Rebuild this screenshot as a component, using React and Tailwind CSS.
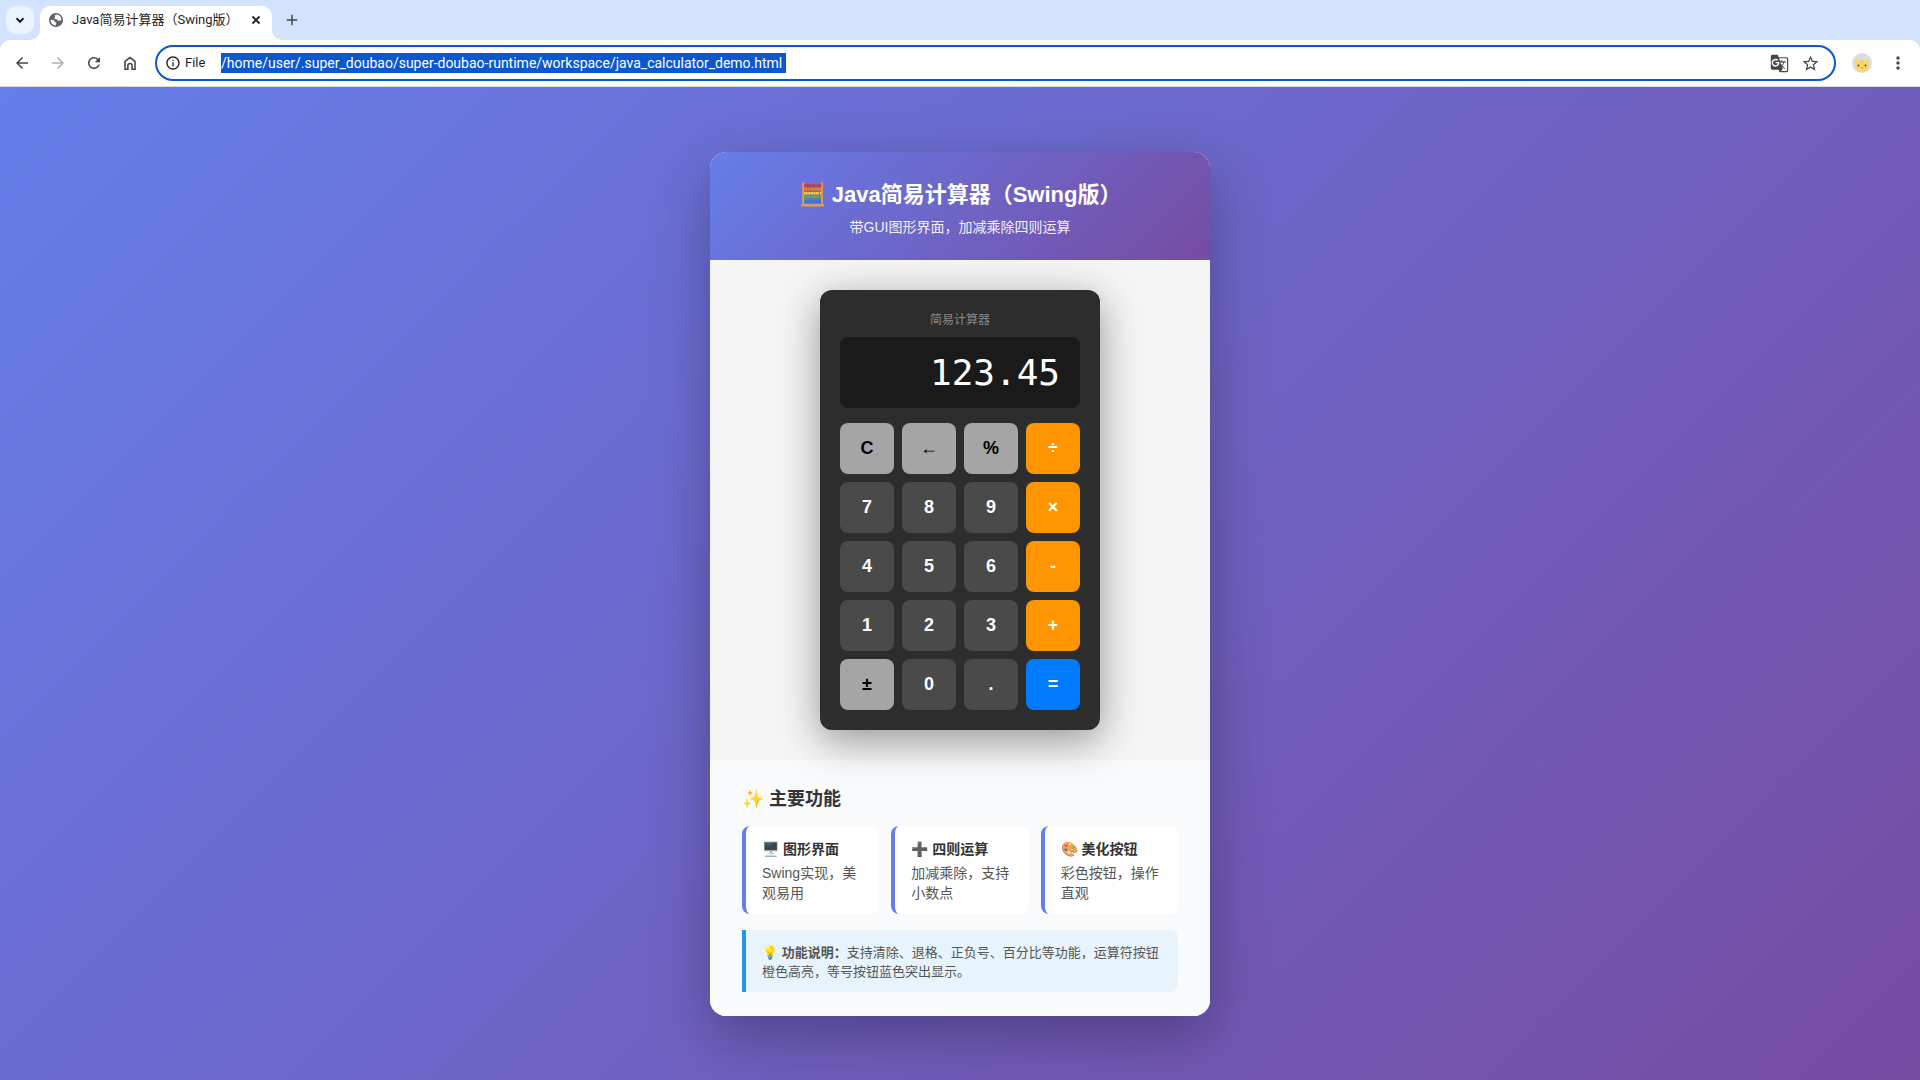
import { useState } from 'react';
import { MdGTranslate, MdStarBorder, MdMoreVert, MdArrowBack, MdArrowForward, MdRefresh, MdInfoOutline, MdAdd } from 'react-icons/md';

const KEYS = [
  { label: 'C', kind: 'fn' },
  { label: '←', kind: 'fn' },
  { label: '%', kind: 'fn' },
  { label: '÷', kind: 'op' },
  { label: '7', kind: 'num' },
  { label: '8', kind: 'num' },
  { label: '9', kind: 'num' },
  { label: '×', kind: 'op' },
  { label: '4', kind: 'num' },
  { label: '5', kind: 'num' },
  { label: '6', kind: 'num' },
  { label: '-', kind: 'op' },
  { label: '1', kind: 'num' },
  { label: '2', kind: 'num' },
  { label: '3', kind: 'num' },
  { label: '+', kind: 'op' },
  { label: '±', kind: 'fn' },
  { label: '0', kind: 'num' },
  { label: '.', kind: 'num' },
  { label: '=', kind: 'eq' },
];

const KEY_STYLES = {
  fn: 'bg-[#a5a5a5] text-black',
  op: 'bg-[#ff9500] text-white',
  num: 'bg-[#4a4a4a] text-white',
  eq: 'bg-[#007aff] text-white',
};

const FEATURES = [
  { title: '🖥️ 图形界面', body: 'Swing实现，美观易用' },
  { title: '➕ 四则运算', body: '加减乘除，支持小数点' },
  { title: '🎨 美化按钮', body: '彩色按钮，操作直观' },
];

function GlobeIcon() {
  return (
    <svg width="16" height="16" viewBox="0 0 16 16">
      <circle cx="8" cy="8" r="7" fill="#5f6368" />
      <path d="M8.500 2.600c-1.300.2-1.700 1-1.500 1.900.2.8-.7 1-.5 1.900.3.900 1.700.6 2.600 1 .8.400.5 1.400 1.500 1.500 1 .1 1.500-.8 2.700-.8a5.500 5.500 0 0 0-4.800-5.500z" fill="#fff" />
      <path d="M2.500 7.800c1.400-.2 2.800 0 3.600.7.700.7.400 1.500 1.300 1.800.8.300 1 .7.900 1.400-.1.600-.6.9-.5 1.700A5.500 5.500 0 0 1 2.500 7.800z" fill="#fff" />
    </svg>
  );
}

function CatAvatar() {
  return (
    <svg width="20" height="20" viewBox="0 0 20 20">
      <circle cx="10" cy="10" r="10" fill="#dadce0" />
      <path d="M4 6.200c.2-.7.800-.8 1.300-.3L7.300 7.600h5.400l2-1.700c.5-.5 1.100-.4 1.300.3.5 1.800.9 4 .9 6.300 0 3.800-3 6.500-6.900 6.500s-6.900-2.700-6.900-6.500c0-2.300.4-4.500.9-6.300z" fill="#fbd866" />
      <path d="M9 7.600h.6v2H9zM10.500 7.600h.6v2h-.6z" fill="#f0a63c" />
      <circle cx="6.500" cy="12.500" r="1" fill="#4a4a4a" />
      <circle cx="13.500" cy="12.500" r="1" fill="#4a4a4a" />
      <path d="M8.600 14.500q.7.900 1.400 0q.7.900 1.400 0" fill="none" stroke="#c77a2a" strokeWidth=".8" />
      <circle cx="5.500" cy="14.800" r="1" fill="#f9b7a0" />
      <circle cx="14.500" cy="14.800" r="1" fill="#f9b7a0" />
    </svg>
  );
}

function TabStrip() {
  return (
    <div className="flex h-10 items-end bg-[#d3e3fd] pl-1.5">
      <button aria-label="Search tabs" className="mb-1.5 flex h-7 w-7 items-center justify-center rounded-[10px] bg-[#ecf3fe] text-[#1f1f1f]">
        <svg width="16" height="16" viewBox="0 0 16 16" fill="none" stroke="currentColor" strokeWidth="2">
          <path d="M4.500 6.300L8 9.800l3.500-3.500" />
        </svg>
      </button>
      <div className="relative ml-1.5 flex h-[34px] w-[232px] items-center rounded-t-[10px] bg-white pb-1.5 pl-2 text-[#1f1f1f]">
        {/* curved feet of the active tab */}
        <svg className="absolute bottom-0 -left-2.5" width="10" height="10" viewBox="0 0 10 10">
          <path d="M10 0v10H0A10 10 0 0 0 10 0z" fill="#fff" />
        </svg>
        <svg className="absolute -right-2.5 bottom-0" width="10" height="10" viewBox="0 0 10 10">
          <path d="M0 0v10h10A10 10 0 0 1 0 0z" fill="#fff" />
        </svg>
        <GlobeIcon />
        <span className="ml-2 flex-1 overflow-hidden text-[13px] leading-5 whitespace-nowrap">Java简易计算器（Swing版）</span>
        <button aria-label="Close tab" className="mr-2 flex h-4 w-4 items-center justify-center">
          <svg width="16" height="16" viewBox="0 0 16 16" fill="none" stroke="currentColor" strokeWidth="1.8">
            <path d="M4.500 4.500l7 7M11.500 4.500l-7 7" />
          </svg>
        </button>
      </div>
      <button aria-label="New tab" className="mb-1.5 ml-1.5 flex h-7 w-7 items-center justify-center text-[#474747]">
        <MdAdd size={18} />
      </button>
    </div>
  );
}

function Toolbar() {
  return (
    <div className="bg-[#d3e3fd]">
      <div className="flex h-[47px] items-center rounded-t-[10px] border-b border-[#dadce0] bg-white px-1 text-[#474747]">
        <button aria-label="Back" className="flex w-9 justify-center">
          <MdArrowBack size={18} />
        </button>
        <button aria-label="Forward" className="flex w-9 justify-center text-[#b0b0b0]">
          <MdArrowForward size={18} />
        </button>
        <button aria-label="Reload" className="flex w-9 justify-center">
          <MdRefresh size={18} />
        </button>
        <button aria-label="Home" className="flex w-9 justify-center">
          <svg width="18" height="18" viewBox="0 0 18 18" fill="none" stroke="currentColor" strokeWidth="1.6">
            <path d="M4 15.200V7.300L9 3.500l5 3.800v7.900h-2.900v-3.600a2.100 2.100 0 0 0-4.200 0v3.600z" />
          </svg>
        </button>
        <div className="ml-[7px] flex h-9 flex-1 items-center rounded-full border-2 border-[#0b57d0] pr-3.5 pl-2">
          <MdInfoOutline size={16} className="text-[#1f1f1f]" />
          <label htmlFor="url" className="ml-1 w-9 shrink-0 text-[13px] text-[#1f1f1f]">File</label>
          <div className="flex flex-1">
            <input
              id="url"
              readOnly
              className="h-5 w-[565px] bg-[#0b57d0] text-[14px] leading-5 text-white outline-none"
              value="/home/user/.super_doubao/super-doubao-runtime/workspace/java_calculator_demo.html"
            />
          </div>
          <button aria-label="Translate" className="mr-3">
            <MdGTranslate size={19} />
          </button>
          <button aria-label="Bookmark">
            <MdStarBorder size={19} />
          </button>
        </div>
        <button aria-label="Profile" className="ml-4">
          <CatAvatar />
        </button>
        <button aria-label="Menu" className="ml-2 flex w-9 justify-center">
          <MdMoreVert size={20} />
        </button>
      </div>
    </div>
  );
}

function Calculator() {
  const [display] = useState('123.45');

  return (
    <div className="relative w-[280px] rounded-xl bg-[#2d2d2d] p-5 shadow-[0_10px_40px_rgba(0,0,0,0.4)]">
      <div className="mb-1.5 text-center text-[12px] leading-[21px] text-[#888]">简易计算器</div>
      <output className="mb-[15px] block rounded-lg bg-[#1a1a1a] px-5 py-[15px] text-right font-['DejaVu_Sans_Mono',monospace] text-[36px] leading-[41px] text-white">
        {display}
      </output>
      <div className="grid grid-cols-4 gap-2">
        {KEYS.map(key => (
          <button key={key.label} className={`h-[51px] rounded-lg text-[18px] font-bold ${KEY_STYLES[key.kind]}`}>
            {key.label}
          </button>
        ))}
      </div>
    </div>
  );
}

export default function App() {
  return (
    <div className="flex min-h-screen flex-col font-['Liberation_Sans','Noto_Sans_CJK_SC',sans-serif]">
      <div className="font-['Roboto','Noto_Sans_CJK_SC',sans-serif]">
        <TabStrip />
        <Toolbar />
      </div>

      <main className="flex flex-1 items-center justify-center bg-[linear-gradient(135deg,#667eea_0%,#764ba2_100%)] p-5">
        <div className="w-[500px] overflow-hidden rounded-2xl bg-white shadow-[0_20px_60px_rgba(0,0,0,0.3)]">
          {/* Header */}
          <header className="bg-[linear-gradient(135deg,#667eea_0%,#764ba2_100%)] px-8 py-6 text-center text-white">
            <h1 className="mb-1 text-[22px] leading-[38px] font-bold">🧮 Java简易计算器（Swing版）</h1>
            <p className="text-[14px] leading-[18px] opacity-90">带GUI图形界面，加减乘除四则运算</p>
          </header>

          {/* Calculator */}
          <div className="flex justify-center bg-[#f5f5f5] p-[30px]">
            <Calculator />
          </div>

          {/* Features */}
          <section className="bg-[#f8fafc] px-8 py-6">
            <h2 className="mb-3 text-[18px] leading-[30px] font-bold text-[#333]">✨ 主要功能</h2>
            <div className="mb-4 grid grid-cols-3 gap-3">
              {FEATURES.map(item => (
                <div key={item.title} className="rounded-lg border-l-4 border-[#667eea] bg-white px-4 pt-[13px] pb-[11px]">
                  <h3 className="mb-1 text-[14px] leading-5 font-bold text-[#333]">{item.title}</h3>
                  <p className="text-[14px] leading-5 text-[#555]">{item.body}</p>
                </div>
              ))}
            </div>
            <p className="rounded-r-lg border-l-4 border-[#2196f3] bg-[#e7f3fd] px-4 pt-[13px] pb-[11px] text-[13px] leading-[19px] text-[#555]">
              💡 <strong>功能说明：</strong>支持清除、退格、正负号、百分比等功能，运算符按钮橙色高亮，等号按钮蓝色突出显示。
            </p>
          </section>
        </div>
      </main>
    </div>
  );
}
